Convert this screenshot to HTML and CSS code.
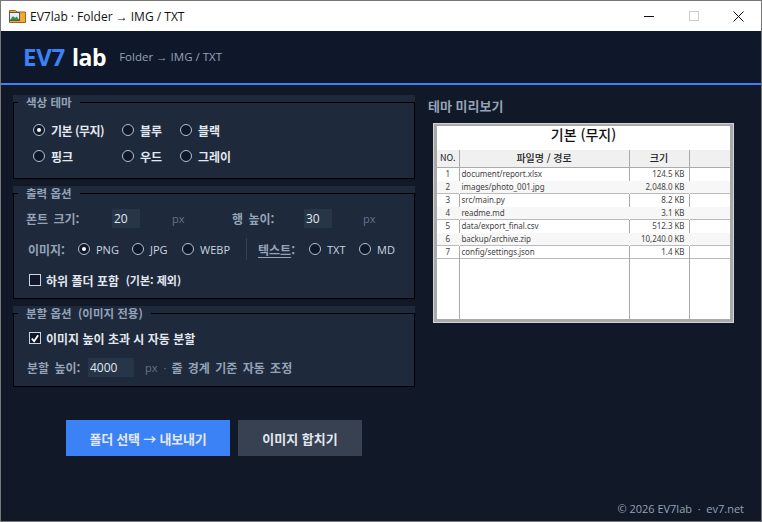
FILE: index.html
```html
<!DOCTYPE html>
<html lang="ko">
<head>
  <meta charset="UTF-8">
  <title>EV7lab · Folder → IMG / TXT</title>
  <link rel="stylesheet" href="styles.css">
</head>
<body>
  <div class="window">
    <div class="titlebar">
      <svg class="app-icon" width="17" height="14" viewBox="0 0 17 14">
        <path d="M0.5 1.5h6l1.5 1.5h8.500v10.500h-16z" fill="#f2a93b" stroke="#a5650f"/>
        <rect x="0.500" y="3.500" width="10" height="8" fill="#e8eef2" stroke="#555"/>
        <path d="M1 11l3-4 2 2 1.500-1.500 3 3.500z" fill="#2f8f4e"/>
      </svg>
      <span class="title-text">EV7lab · Folder → IMG / TXT</span>
      <div class="controls">
        <div class="ctl"><svg width="10" height="10" viewBox="0 0 10 10"><path d="M0 5.500h10" stroke="#111"/></svg></div>
        <div class="ctl"><svg width="10" height="10" viewBox="0 0 10 10"><rect x="0.500" y="0.500" width="9" height="9" fill="none" stroke="#ccc"/></svg></div>
        <div class="ctl"><svg width="11" height="11" viewBox="0 0 11 11"><path d="M0.500 0.500l10 10M10.500 0.500l-10 10" stroke="#111"/></svg></div>
      </div>
    </div>

    <header class="header">
      <div class="logo"><span class="logo-ev">EV7</span><span class="logo-lab">lab</span></div>
      <div class="subtitle">Folder → IMG / TXT</div>
    </header>

    <div class="main">
      <div class="left">
        <div class="group">
          <fieldset>
            <legend>색상 테마</legend>
            <div class="theme-grid">
              <label class="opt strong tight"><i class="radio on"></i>기본 (무지)</label>
              <label class="opt strong"><i class="radio"></i>블루</label>
              <label class="opt strong"><i class="radio"></i>블랙</label>
              <label class="opt strong"><i class="radio"></i>핑크</label>
              <label class="opt strong"><i class="radio"></i>우드</label>
              <label class="opt strong"><i class="radio"></i>그레이</label>
            </div>
          </fieldset>
        </div>

        <div class="group">
          <fieldset>
            <legend>출력 옵션</legend>
            <div class="output">
              <div class="row size-row">
                <span class="label w-font">폰트 크기:</span>
                <span class="input">20</span>
                <span class="unit w-unit">px</span>
                <span class="label w-line">행 높이:</span>
                <span class="input">30</span>
                <span class="unit w-last">px</span>
              </div>
              <div class="row format-row">
                <span class="label w-image">이미지:</span>
                <label class="opt fmt w-png"><i class="radio on"></i>PNG</label>
                <label class="opt fmt w-jpg"><i class="radio"></i>JPG</label>
                <label class="opt fmt w-webp"><i class="radio"></i>WEBP</label>
                <span class="divider"></span>
                <span class="label w-text"><u>텍스트</u>:</span>
                <label class="opt fmt w-txt"><i class="radio"></i>TXT</label>
                <label class="opt fmt"><i class="radio"></i>MD</label>
              </div>
              <label class="opt strong check-row"><i class="check"></i>하위 폴더 포함&nbsp;&nbsp;<span class="small">(기본: 제외)</span></label>
            </div>
          </fieldset>
        </div>

        <div class="group">
          <fieldset>
            <legend>분할 옵션&nbsp;&nbsp;(이미지 전용)</legend>
            <div class="split">
              <label class="opt strong check-row">
                <i class="check on"><svg width="11" height="11" viewBox="0 0 11 11"><path d="M2 5.500l2.500 3 4.500-6.500" fill="none" stroke="#fff" stroke-width="2"/></svg></i>이미지 높이 초과 시 자동 분할
              </label>
              <div class="row split-row">
                <span class="label w-split">분할 높이:</span>
                <span class="input wide">4000</span>
                <span class="unit w-px">px</span>
                <span class="unit dot">·</span>
                <span class="label">줄 경계 기준 자동 조정</span>
              </div>
            </div>
          </fieldset>
        </div>

        <div class="actions">
          <button class="btn primary">폴더 선택 → 내보내기</button>
          <button class="btn secondary">이미지 합치기</button>
        </div>
      </div>

      <div class="right">
        <div class="preview-title">테마 미리보기</div>
        <div class="preview">
          <div class="sheet">
            <div class="sheet-title">기본 (무지)</div>
            <table>
              <colgroup><col class="c-no"><col class="c-name"><col class="c-size"><col></colgroup>
              <thead><tr><th class="th-no">NO.</th><th>파일명 / 경로</th><th>크기</th><th></th></tr></thead>
              <tbody>
                <tr><td class="n">1</td><td>document/report.xlsx</td><td class="s">124.5 KB</td><td></td></tr>
                <tr class="alt"><td class="n">2</td><td>images/photo_001.jpg</td><td class="s">2,048.0 KB</td><td></td></tr>
                <tr><td class="n">3</td><td>src/main.py</td><td class="s">8.2 KB</td><td></td></tr>
                <tr class="alt"><td class="n">4</td><td>readme.md</td><td class="s">3.1 KB</td><td></td></tr>
                <tr><td class="n">5</td><td>data/export_final.csv</td><td class="s">512.3 KB</td><td></td></tr>
                <tr class="alt"><td class="n">6</td><td>backup/archive.zip</td><td class="s">10,240.0 KB</td><td></td></tr>
                <tr class="last"><td class="n">7</td><td>config/settings.json</td><td class="s">1.4 KB</td><td></td></tr>
                <tr class="filler"><td></td><td></td><td></td><td></td></tr>
              </tbody>
            </table>
          </div>
        </div>
      </div>
    </div>

    <footer class="footer">© 2026 EV7lab &nbsp;·&nbsp; ev7.net</footer>
  </div>
</body>
</html>
```

FILE: styles.css
```css
* {
  margin: 0;
  padding: 0;
  box-sizing: border-box;
}
html, body {
  width: 762px;
  height: 522px;
  overflow: hidden;
}
body {
  font-family: "Noto Sans CJK KR", "Noto Sans", sans-serif;
  background: #111827;
}
.window {
  width: 762px;
  height: 522px;
  border: 1px solid #777;
  display: flex;
  flex-direction: column;
  background: #111827;
}
.titlebar {
  height: 30px;
  background: #fff;
  display: flex;
  align-items: center;
  padding-left: 8px;
  flex: none;
}
.app-icon {
  margin-right: 4px;
}
.title-text {
  font-family: "Open Sans", sans-serif;
  font-size: 12px;
  color: #111;
}
.controls {
  margin-left: auto;
  display: flex;
}
.ctl {
  width: 45px;
  height: 30px;
  display: flex;
  align-items: center;
  justify-content: center;
}
.header {
  height: 54px;
  background: #0f172a;
  border-bottom: 2px solid #3b82f6;
  display: flex;
  align-items: center;
  padding-left: 22px;
  flex: none;
}
.logo {
  font-family: "Open Sans", sans-serif;
  font-weight: 700;
  color: #fff;
  display: flex;
  align-items: baseline;
  gap: 7px;
  margin-bottom: 2px;
}
.logo-ev {
  font-size: 24px;
  letter-spacing: -0.3px;
  color: #3b82f6;
}
.logo-lab {
  font-size: 23px;
  letter-spacing: -0.4px;
}
.subtitle {
  font-family: "Open Sans", sans-serif;
  font-size: 11.5px;
  color: #94a3b8;
  margin-left: 13px;
  margin-bottom: 2px;
}
.main {
  display: flex;
  padding: 10px 0 0 12px;
  flex: none;
}
.left {
  width: 402px;
  display: flex;
  flex-direction: column;
  gap: 7px;
}
.group {
  background: #1e293b;
}
fieldset {
  border: 1px solid #000;
  display: block;
}
legend {
  margin-left: 4px;
  padding: 0 8px;
  font-size: 11.500px;
  line-height: 14px;
  height: 14px;
  font-weight: 700;
  color: #94a3b8;
}
.theme-grid {
  display: grid;
  grid-template-columns: 89px 58px auto;
  grid-auto-rows: 26px;
  padding: 8px 0 9px 19px;
  align-items: center;
}
.opt {
  display: flex;
  align-items: center;
  font-size: 12px;
  color: #e2e8f0;
  white-space: nowrap;
}
.strong {
  font-weight: 700;
}
.tight {
  letter-spacing: -0.5px;
}
.radio {
  width: 12px;
  height: 12px;
  border-radius: 50%;
  border: 1px solid #b6c0cd;
  background: #0f172a;
  margin-right: 6px;
  flex: none;
  position: relative;
}
.radio.on::after {
  content: "";
  position: absolute;
  top: 3px;
  left: 3px;
  width: 4px;
  height: 4px;
  border-radius: 50%;
  background: #fff;
}
.check {
  width: 12px;
  height: 12px;
  border: 1px solid #cbd5e1;
  background: #0f172a;
  margin-right: 5px;
  flex: none;
  display: flex;
  align-items: center;
  justify-content: center;
}
.row {
  display: flex;
  align-items: center;
}
.label {
  font-size: 12px;
  font-weight: 700;
  word-spacing: 2px;
  color: #94a3b8;
  white-space: nowrap;
}
.label u {
  text-underline-offset: 2px;
}
.input {
  width: 28px;
  height: 19px;
  background: #273549;
  color: #e2e8f0;
  font-family: "Open Sans", sans-serif;
  font-size: 12px;
  line-height: 19px;
  padding-left: 2px;
}
.input.wide {
  width: 46px;
}
.unit {
  font-family: "Open Sans", sans-serif;
  font-size: 11px;
  color: #64748b;
}
.output {
  padding: 9px 0 10px 12px;
}
.size-row {
  height: 19px;
}
.w-font { width: 86px; }
.w-unit { width: 60px; margin-left: 32px; }
.w-line { width: 72px; }
.w-last { margin-left: 31px; }
.format-row {
  height: 22px;
  margin-top: 10px;
  padding-left: 2px;
}
.w-image { width: 50px; }
.fmt {
  font-family: "Open Sans", sans-serif;
  font-size: 11px;
  font-weight: 400;
  color: #cbd5e1;
}
.w-png { width: 54px; }
.w-jpg { width: 50px; }
.w-webp { width: 64px; }
.w-text { width: 51px; }
.w-txt { width: 50px; }
.divider {
  width: 1px;
  height: 22px;
  background: #334155;
  margin-right: 11px;
}
.check-row {
  margin: 12px 0 0 3px;
  height: 16px;
}
.small {
  font-size: 11px;
}
.split {
  padding: 10px 0 9px 15px;
}
.split .check-row {
  margin: 0;
}
.split-row {
  margin-top: 12px;
  margin-left: -2px;
}
.w-split { width: 61px; }
.w-px { margin-left: 11px; }
.dot { margin: 0 5px 0 6px; }
.actions {
  display: flex;
  gap: 8px;
  padding: 26px 0 0 53px;
}
.btn {
  height: 36px;
  border: none;
  font-family: inherit;
  font-size: 13px;
  font-weight: 700;
  color: #e2e8f0;
}
.primary {
  width: 164px;
  background: #3b82f6;
  letter-spacing: -0.2px;
}
.secondary {
  width: 124px;
  background: #374151;
}
.right {
  margin-left: 13px;
  flex: 1;
}
.preview-title {
  font-size: 13px;
  font-weight: 700;
  color: #94a3b8;
  line-height: 18px;
  margin-top: 2px;
}
.preview {
  width: 301px;
  height: 200px;
  margin: 8px 0 0 5px;
  border: 1px solid #d4d4d4;
  background: #aaa;
  padding: 2px 3px 3px;
}
.sheet {
  background: #fff;
  height: 100%;
  display: flex;
  flex-direction: column;
  color: #222;
}
.sheet-title {
  height: 24px;
  text-align: center;
  font-size: 14px;
  font-weight: 500;
  color: #111;
  line-height: 16px;
}
table {
  width: 100%;
  flex: 1;
  border-collapse: collapse;
  table-layout: fixed;
  font-family: "Noto Sans", sans-serif;
  font-size: 8px;
  letter-spacing: -0.05px;
}
.c-no { width: 22px; }
.c-name { width: 170px; }
.c-size { width: 60px; }
th {
  height: 17px;
  padding-bottom: 2px;
  background: #f0f0f0;
  border-right: 1px solid #aaa;
  border-bottom: 1px solid #aaa;
  font-family: "Noto Sans CJK KR", sans-serif;
  font-size: 10px;
  font-weight: 500;
  color: #222;
}
.th-no {
  font-size: 9px;
  font-weight: 400;
}
th:last-child, td:last-child {
  border-right: none;
}
td {
  height: 13px;
  border-right: 1px solid #aaa;
  padding: 0 2px;
  color: #444;
  white-space: nowrap;
  line-height: 12px;
}
td.n {
  text-align: center;
}
td.s {
  text-align: right;
  padding-right: 4px;
}
.alt td {
  background: #f7f7f7;
  border-right-color: #f7f7f7;
  box-shadow: inset 0 -1px #bbb;
}
.last td {
  box-shadow: inset 0 -1px #bbb;
}
.filler td {
  height: auto;
}
.footer {
  margin-top: auto;
  padding: 0 17px 5px 0;
  text-align: right;
  font-family: "Open Sans", sans-serif;
  font-size: 11px;
  color: #94a3b8;
}
```
